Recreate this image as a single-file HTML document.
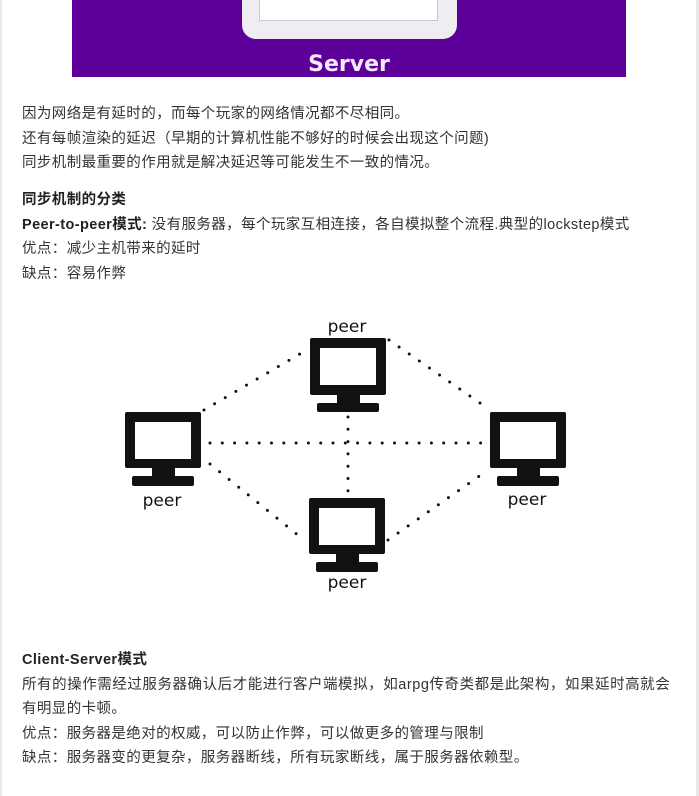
<!DOCTYPE html>
<html><head><meta charset="utf-8"><style>
html,body{margin:0;padding:0;background:#fff;}
body{width:699px;height:796px;position:relative;overflow:hidden;font-family:"Liberation Sans","Noto Sans CJK SC",sans-serif;color:#333;}
.bl{position:absolute;left:0;top:0;width:2px;height:796px;background:#e8e8e8;}
.br{position:absolute;right:0;top:0;width:3px;height:796px;background:#e8e8e8;}
.t{position:absolute;left:22px;width:670px;font-size:14.5px;line-height:24.5px;margin:0;letter-spacing:0.4px;white-space:nowrap;}
b{color:#222;}
</style></head><body>
<div class="bl"></div><div class="br"></div>
<div style="position:absolute;left:72px;top:0;width:554px;height:77px;background:#5c0099;"></div>
<div style="position:absolute;left:242px;top:0;width:215px;height:39px;background:#efedf1;border-radius:0 0 14px 14px;"></div>
<div style="position:absolute;left:259px;top:0;width:177px;height:20px;background:#fff;border:1px solid #c8c8c8;border-top:none;"></div>
<div style="position:absolute;left:272px;top:52px;width:154px;text-align:center;color:#f3eaf8;font-weight:bold;font-size:22px;font-family:'DejaVu Sans',sans-serif;">Server</div>

<div class="t" style="top:102px">因为网络是有延时的，而每个玩家的网络情况都不尽相同。<br>还有每帧渲染的延迟（早期的计算机性能不够好的时候会出现这个问题)<br>同步机制最重要的作用就是解决延迟等可能发生不一致的情况。</div>
<div class="t" style="top:188px"><b>同步机制的分类</b><br><b>Peer-to-peer模式:</b> 没有服务器，每个玩家互相连接，各自模拟整个流程.典型的lockstep模式<br>优点：减少主机带来的延时<br>缺点：容易作弊</div>

<svg style="position:absolute;left:0;top:0" width="699" height="796">
<g fill="#111">
<rect x="310" y="338" width="76" height="57" rx="2"/><rect x="337" y="394" width="23" height="10"/><rect x="317" y="403" width="62" height="9" rx="2"/>
<rect x="125" y="412" width="76" height="56" rx="2"/><rect x="152" y="467" width="23" height="10"/><rect x="132" y="476" width="62" height="10" rx="2"/>
<rect x="490" y="412" width="76" height="56" rx="2"/><rect x="517" y="467" width="23" height="10"/><rect x="497" y="476" width="62" height="10" rx="2"/>
<rect x="309" y="498" width="76" height="56" rx="2"/><rect x="336" y="553" width="23" height="10"/><rect x="316" y="562" width="62" height="10" rx="2"/>
</g>
<g fill="#fff">
<rect x="320" y="348" width="56" height="37"/>
<rect x="135" y="422" width="56" height="37"/>
<rect x="500" y="422" width="56" height="37"/>
<rect x="319" y="508" width="56" height="37"/>
</g>
<g stroke="#111" stroke-width="3" stroke-linecap="round" stroke-dasharray="0 12.3" fill="none">
<line x1="210" y1="443" x2="488" y2="443"/>
<line x1="348" y1="417" x2="348" y2="493"/>
<line x1="204" y1="410" x2="310" y2="348"/>
<line x1="389" y1="340" x2="490" y2="410"/>
<line x1="210" y1="464" x2="304" y2="540"/>
<line x1="388" y1="540" x2="488" y2="470"/>
</g>
<g font-family="'DejaVu Sans',sans-serif" font-size="17" fill="#111" text-anchor="middle">
<text x="347" y="332">peer</text>
<text x="162" y="506">peer</text>
<text x="527" y="505">peer</text>
<text x="347" y="588">peer</text>
</g>
</svg>

<div class="t" style="top:648px"><b>Client-Server模式</b><br><span style="letter-spacing:0.55px">所有的操作需经过服务器确认后才能进行客户端模拟，如arpg传奇类都是此架构，如果延时高就会</span><br>有明显的卡顿。<br>优点：服务器是绝对的权威，可以防止作弊，可以做更多的管理与限制<br>缺点：服务器变的更复杂，服务器断线，所有玩家断线，属于服务器依赖型。</div>
</body></html>
